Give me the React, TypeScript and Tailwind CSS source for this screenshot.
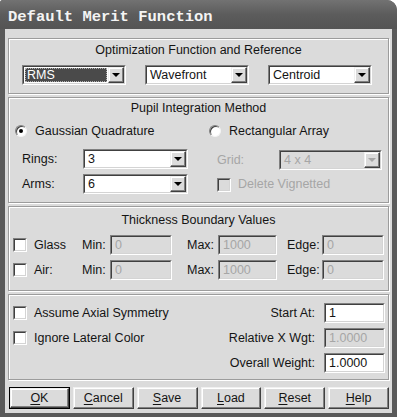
import type { ReactNode } from 'react';

const sunkenOuter = 'border border-t-[#808080] border-l-[#808080] border-b-white border-r-white';
const sunkenInner = 'border border-t-[#404040] border-l-[#404040] border-b-[#d4d4d4] border-r-[#d4d4d4]';
const raised =
  'border border-t-[#f0f0f0] border-l-[#f0f0f0] border-b-[#404040] border-r-[#404040] bg-[#dbdbdb] shadow-[inset_-1px_-1px_0_#808080,inset_1px_1px_0_#ffffff]';
const groupBox =
  'border border-[#9c9c9c] shadow-[inset_1px_1px_0_#ffffff,1px_1px_0_#ffffff]';

function Arrow({ disabled }: { disabled?: boolean }) {
  return (
    <div
      className={`w-0 h-0 border-x-[4px] border-t-[4px] border-x-transparent ${
        disabled ? 'border-t-[#a6a6a6]' : 'border-t-black'
      }`}
    />
  );
}

function Combo({
  value,
  className,
  selected,
  disabled,
}: {
  value: string;
  className: string;
  selected?: boolean;
  disabled?: boolean;
}) {
  return (
    <div className={`h-[20px] ${sunkenOuter} ${className}`}>
      <div className={`h-full flex ${sunkenInner} ${disabled ? 'bg-[#dbdbdb]' : 'bg-white'}`}>
        <div className="flex-1 flex p-[1px]">
          <div
            className={`flex-1 flex items-center px-[2px] ${
              selected
                ? 'bg-[#4a4a4a] text-white outline-1 outline-dotted outline-[#b0b0b0] -outline-offset-1'
                : disabled
                  ? 'text-[#a6a6a6]'
                  : 'text-[#141414]'
            }`}
          >
            {value}
          </div>
        </div>
        <div className={`w-[16px] h-full flex items-center justify-center ${raised}`}>
          <Arrow disabled={disabled} />
        </div>
      </div>
    </div>
  );
}

function Field({ value, className, disabled }: { value: string; className: string; disabled?: boolean }) {
  return (
    <div className={`h-[20px] ${sunkenOuter} ${className}`}>
      <div
        className={`h-full flex items-center px-[3px] ${sunkenInner} ${
          disabled ? 'bg-[#dbdbdb] text-[#a6a6a6]' : 'bg-white text-[#141414]'
        }`}
      >
        {value}
      </div>
    </div>
  );
}

function Check({ disabled }: { disabled?: boolean }) {
  return (
    <div className={`w-[14px] h-[14px] ${sunkenOuter}`}>
      <div className={`w-full h-full ${sunkenInner} ${disabled ? 'bg-[#dbdbdb]' : 'bg-white'}`} />
    </div>
  );
}

function Radio({ checked }: { checked?: boolean }) {
  return (
    <div className="w-[12px] h-[12px] rounded-full bg-white border border-t-[#808080] border-l-[#808080] border-b-[#f4f4f4] border-r-[#f4f4f4] flex items-center justify-center shadow-[inset_1px_1px_0_#404040]">
      {checked && <div className="w-[4px] h-[4px] rounded-full bg-black" />}
    </div>
  );
}

function Btn({ first, rest, isDefault }: { first: string; rest: string; isDefault?: boolean }) {
  return (
    <div className={`w-[61px] h-[22px] ${isDefault ? 'border border-black' : ''}`}>
      <div className={`w-full h-full flex items-center justify-center text-[#141414] ${raised}`}>
        <span>
          <span className="underline underline-offset-2">{first}</span>
          {rest}
        </span>
      </div>
    </div>
  );
}

function Group({ className, title, children }: { className: string; title: string; children: ReactNode }) {
  return (
    <div className={`${groupBox} ${className}`}>
      <div className="text-center leading-[16px] text-[#141414]">{title}</div>
      {children}
    </div>
  );
}

function ThicknessRow({ label }: { label: string }) {
  return (
    <div className="flex items-center h-[20px] pl-[4px]">
      <Check />
      <span className="ml-[7px] w-[48px]">{label}</span>
      <span className="w-[28px]">Min:</span>
      <Field value="0" disabled className="w-[62px]" />
      <span className="ml-[15px] w-[31px]">Max:</span>
      <Field value="1000" disabled className="w-[59px]" />
      <span className="ml-[10px] w-[35px]">Edge:</span>
      <Field value="0" disabled className="w-[62px]" />
    </div>
  );
}

export default function App() {
  return (
    <div className="w-[397px] h-[417px] bg-[#5a5a5a] rounded-tr-[10px] rounded-tl-[3px] flex flex-col overflow-hidden font-['Liberation_Sans',Arial,sans-serif] text-[12.5px] text-[#141414]">
      <div className="h-[29px] shrink-0 flex items-center pl-[8px] pt-[6px] bg-gradient-to-b from-[#727272] via-[#5c5c5c] to-[#545454]">
        <span className="font-['Liberation_Mono',monospace] font-bold text-[15.5px] text-[#f4f4f4] leading-none">
          Default Merit Function
        </span>
      </div>

      <div className="flex-1 mx-[5px] mb-[4px] bg-[#dbdbdb] px-[3px] pt-[9px] flex flex-col">
        <Group className="h-[56px] pt-[3px]" title="Optimization Function and Reference">
          <div className="mt-[7px] pl-[13px] flex gap-[19px]">
            <Combo value="RMS" selected className="w-[104px]" />
            <Combo value="Wavefront" className="w-[104px]" />
            <Combo value="Centroid" className="w-[104px]" />
          </div>
        </Group>

        <Group className="mt-[3px] h-[106px] pt-[2px]" title="Pupil Integration Method">
          <div className="mt-[7px] pl-[6px] flex">
            <div className="w-[194px] flex flex-col">
              <div className="h-[16px] flex items-center gap-[8px]">
                <Radio checked />
                <span>Gaussian Quadrature</span>
              </div>
              <div className="mt-[10px] pl-[7px] flex items-center">
                <span className="w-[61px]">Rings:</span>
                <Combo value="3" className="w-[105px]" />
              </div>
              <div className="mt-[5px] pl-[7px] flex items-center">
                <span className="w-[61px]">Arms:</span>
                <Combo value="6" className="w-[105px]" />
              </div>
            </div>
            <div className="flex flex-col">
              <div className="h-[16px] flex items-center gap-[8px]">
                <Radio />
                <span>Rectangular Array</span>
              </div>
              <div className="mt-[11px] pl-[8px] flex items-center">
                <span className="w-[62px] text-[#a6a6a6]">Grid:</span>
                <Combo value="4 x 4" disabled className="w-[103px]" />
              </div>
              <div className="mt-[7px] pl-[8px] h-[15px] flex items-center gap-[7px]">
                <Check disabled />
                <span className="text-[#a6a6a6]">Delete Vignetted</span>
              </div>
            </div>
          </div>
        </Group>

        <Group className="mt-[3px] h-[85px] pt-[5px]" title="Thickness Boundary Values">
          <div className="mt-[7px]">
            <ThicknessRow label="Glass" />
          </div>
          <div className="mt-[5px]">
            <ThicknessRow label="Air:" />
          </div>
        </Group>

        <div className={`${groupBox} mt-[3px] h-[86px] pt-[8px] pl-[4px] pr-[3px] flex flex-col gap-[5px]`}>
          <div className="h-[20px] flex items-center justify-between">
            <div className="flex items-center gap-[7px]">
              <Check />
              <span>Assume Axial Symmetry</span>
            </div>
            <div className="flex items-center gap-[9px]">
              <span>Start At:</span>
              <Field value="1" className="w-[61px]" />
            </div>
          </div>
          <div className="h-[20px] flex items-center justify-between">
            <div className="flex items-center gap-[7px]">
              <Check />
              <span>Ignore Lateral Color</span>
            </div>
            <div className="flex items-center gap-[9px]">
              <span>Relative X Wgt:</span>
              <Field value="1.0000" disabled className="w-[61px]" />
            </div>
          </div>
          <div className="h-[20px] flex items-center justify-end">
            <div className="flex items-center gap-[9px]">
              <span>Overall Weight:</span>
              <Field value="1.0000" className="w-[61px]" />
            </div>
          </div>
        </div>

        <div className="mt-[7px] ml-[1px] flex gap-[3px]">
          <Btn first="O" rest="K" isDefault />
          <Btn first="C" rest="ancel" />
          <Btn first="S" rest="ave" />
          <Btn first="L" rest="oad" />
          <Btn first="R" rest="eset" />
          <Btn first="H" rest="elp" />
        </div>
      </div>
    </div>
  );
}
